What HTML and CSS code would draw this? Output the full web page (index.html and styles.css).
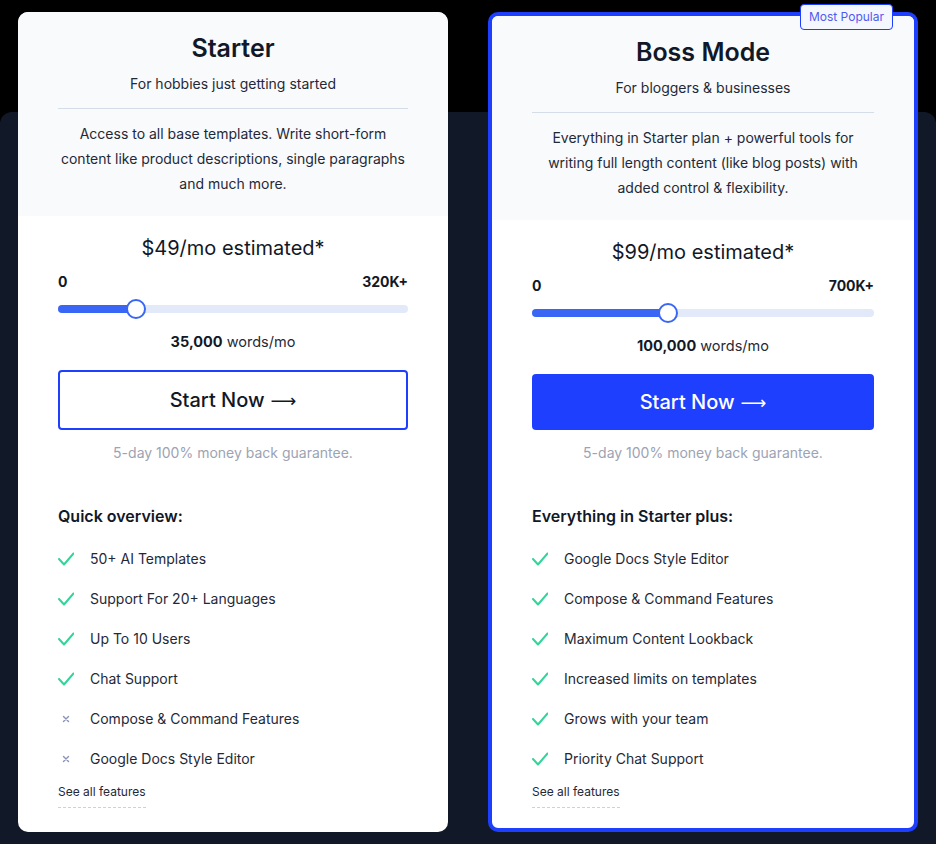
FILE: index.html
```html
<!DOCTYPE html>
<html lang="en">
<head>
    <meta charset="UTF-8">
    <meta name="viewport" content="width=device-width, initial-scale=1.0">
    <title>Pricing</title>
    <link rel="stylesheet" href="styles.css">
</head>
<body>
    <section class="pricing">
        <div class="plans">
            <!-- Starter plan -->
            <div class="plan">
                <div class="plan-head">
                    <h2>Starter</h2>
                    <p class="tagline">For hobbies just getting started</p>
                    <p class="summary">Access to all base templates. Write short-form content like product descriptions, single paragraphs and much more.</p>
                </div>
                <div class="plan-body">
                    <div class="price">$49/mo estimated*</div>
                    <div class="range-labels"><span>0</span><span>320K+</span></div>
                    <div class="slider">
                        <div class="slider-fill" style="width: 22.3%"></div>
                        <div class="slider-thumb" style="left: 22.3%"></div>
                    </div>
                    <div class="words"><b>35,000</b> words/mo</div>
                    <a class="btn btn-outline" href="#">Start Now <span class="arrow">&#x27F6;</span></a>
                    <p class="guarantee">5-day 100% money back guarantee.</p>

                    <h3>Quick overview:</h3>
                    <ul class="features">
                        <li><svg class="ico check" viewBox="0 0 16 14"><polyline points="1,7 6,12.5 15.5,1.5"/></svg>50+ AI Templates</li>
                        <li><svg class="ico check" viewBox="0 0 16 14"><polyline points="1,7 6,12.5 15.5,1.5"/></svg>Support For 20+ Languages</li>
                        <li><svg class="ico check" viewBox="0 0 16 14"><polyline points="1,7 6,12.5 15.5,1.5"/></svg>Up To 10 Users</li>
                        <li><svg class="ico check" viewBox="0 0 16 14"><polyline points="1,7 6,12.5 15.5,1.5"/></svg>Chat Support</li>
                        <li><svg class="ico cross" viewBox="0 0 16 14"><path d="M5.5 4.5l5 5M10.5 4.5l-5 5"/></svg>Compose &amp; Command Features</li>
                        <li><svg class="ico cross" viewBox="0 0 16 14"><path d="M5.5 4.5l5 5M10.5 4.5l-5 5"/></svg>Google Docs Style Editor</li>
                    </ul>
                    <a class="see-all" href="#">See all features</a>
                </div>
            </div>

            <!-- Boss Mode plan -->
            <div class="plan plan-featured">
                <span class="badge">Most Popular</span>
                <div class="plan-head">
                    <h2>Boss Mode</h2>
                    <p class="tagline">For bloggers &amp; businesses</p>
                    <p class="summary">Everything in Starter plan + powerful tools for writing full length content (like blog posts) with added control &amp; flexibility.</p>
                </div>
                <div class="plan-body">
                    <div class="price">$99/mo estimated*</div>
                    <div class="range-labels"><span>0</span><span>700K+</span></div>
                    <div class="slider">
                        <div class="slider-fill" style="width: 39.8%"></div>
                        <div class="slider-thumb" style="left: 39.8%"></div>
                    </div>
                    <div class="words"><b>100,000</b> words/mo</div>
                    <a class="btn btn-solid" href="#">Start Now <span class="arrow">&#x27F6;</span></a>
                    <p class="guarantee">5-day 100% money back guarantee.</p>

                    <h3>Everything in Starter plus:</h3>
                    <ul class="features">
                        <li><svg class="ico check" viewBox="0 0 16 14"><polyline points="1,7 6,12.5 15.5,1.5"/></svg>Google Docs Style Editor</li>
                        <li><svg class="ico check" viewBox="0 0 16 14"><polyline points="1,7 6,12.5 15.5,1.5"/></svg>Compose &amp; Command Features</li>
                        <li><svg class="ico check" viewBox="0 0 16 14"><polyline points="1,7 6,12.5 15.5,1.5"/></svg>Maximum Content Lookback</li>
                        <li><svg class="ico check" viewBox="0 0 16 14"><polyline points="1,7 6,12.5 15.5,1.5"/></svg>Increased limits on templates</li>
                        <li><svg class="ico check" viewBox="0 0 16 14"><polyline points="1,7 6,12.5 15.5,1.5"/></svg>Grows with your team</li>
                        <li><svg class="ico check" viewBox="0 0 16 14"><polyline points="1,7 6,12.5 15.5,1.5"/></svg>Priority Chat Support</li>
                    </ul>
                    <a class="see-all" href="#">See all features</a>
                </div>
            </div>
        </div>
    </section>
</body>
</html>
```

FILE: styles.css
```css
body {
    margin: 0;
    background-color: #000;
    font-family: Inter, "Noto Sans", sans-serif;
    color: #1f2937;
}

.pricing {
    position: relative;
    padding: 12px 18px;
    min-height: 820px;
}

/* dark band behind the cards */
.pricing::before {
    content: "";
    position: absolute;
    top: 112px;
    left: 0;
    right: 0;
    bottom: 0;
    background-color: #111827;
    border-radius: 12px 12px 0 0;
}

.plans {
    position: relative;
    display: grid;
    grid-template-columns: 430px 430px;
    gap: 40px;
}

.plan {
    position: relative;
    display: flex;
    flex-direction: column;
    height: 820px;
    box-sizing: border-box;
    background-color: white;
    border-radius: 10px;
}

.plan-featured {
    border: 4px solid #1f3fff;
}

.plan-head {
    background-color: #f8fafc;
    padding: 20px 40px 20px;
    text-align: center;
    border-radius: 10px 10px 0 0;
}

.plan-featured .plan-head {
    border-radius: 6px 6px 0 0;
}

h2 {
    margin: 0;
    font-size: 25px;
    line-height: 32px;
    font-weight: 600;
    color: #111827;
}

.tagline {
    margin: 10px 0 0;
    padding-bottom: 14px;
    font-size: 14px;
    line-height: 20px;
    color: #1f2937;
    border-bottom: 1px solid #d5dde8;
}

.summary {
    margin: 12px 0 0;
    font-size: 14px;
    line-height: 25px;
    color: #1f2937;
}

.badge {
    position: absolute;
    top: -12px;
    right: 21px;
    padding: 0 8px;
    height: 24px;
    line-height: 24px;
    font-size: 12px;
    color: #4f5bf0;
    background-color: #f5f7ff;
    border: 1px solid #1f3fff;
    border-radius: 4px;
}

.plan-body {
    flex: 1;
    display: flex;
    flex-direction: column;
    padding: 18px 40px 24px;
}

.price {
    text-align: center;
    font-size: 20px;
    line-height: 28px;
    color: #111827;
}

.range-labels {
    display: flex;
    justify-content: space-between;
    margin-top: 10px;
    font-size: 14px;
    line-height: 20px;
    font-weight: 700;
    color: #111827;
}

.slider {
    position: relative;
    margin-top: 13px;
    height: 8px;
    border-radius: 4px;
    background-color: #e2e9f8;
}

.slider-fill {
    height: 100%;
    border-radius: 4px;
    background-color: #3a66f6;
}

.slider-thumb {
    position: absolute;
    top: -6px;
    width: 20px;
    height: 20px;
    margin-left: -10px;
    box-sizing: border-box;
    border-radius: 50%;
    background-color: white;
    border: 2px solid #3a66f6;
}

.words {
    margin-top: 19px;
    text-align: center;
    font-size: 14.5px;
    line-height: 20px;
    color: #1f2937;
}

.words b {
    color: #111827;
}

.btn {
    display: flex;
    align-items: center;
    justify-content: center;
    gap: 6px;
    margin-top: 18px;
    box-sizing: border-box;
    border-radius: 4px;
    font-size: 20px;
    font-weight: 500;
    text-decoration: none;
}

.arrow {
    font-family: "DejaVu Sans", sans-serif;
    font-weight: 400;
    font-size: 18px;
}

.btn-outline {
    height: 60px;
    border: 2px solid #1f3fff;
    color: #111827;
}

.btn-solid {
    height: 56px;
    background-color: #1f3fff;
    color: white;
}

.guarantee {
    margin: 13px 0 0;
    text-align: center;
    font-size: 14px;
    line-height: 20px;
    color: #9ca3b4;
}

h3 {
    margin: 41px 0 0;
    font-size: 16px;
    line-height: 24px;
    font-weight: 600;
    color: #111827;
}

.features {
    list-style: none;
    margin: 21px 0 0;
    padding: 0;
    display: flex;
    flex-direction: column;
    gap: 20px;
}

.features li {
    display: flex;
    align-items: center;
    gap: 16px;
    font-size: 14px;
    line-height: 20px;
    color: #1f2937;
}

.ico {
    width: 16px;
    height: 14px;
    flex-shrink: 0;
    fill: none;
    stroke-linecap: round;
    stroke-linejoin: round;
}

.check {
    stroke: #34d399;
    stroke-width: 2;
}

.cross {
    stroke: #8a92b8;
    stroke-width: 1.4;
}

.see-all {
    align-self: flex-start;
    margin-top: 15px;
    padding-bottom: 7px;
    font-size: 12px;
    line-height: 16px;
    color: #1f2937;
    text-decoration: none;
    border-bottom: 1px dashed #cbd2dc;
}
```
